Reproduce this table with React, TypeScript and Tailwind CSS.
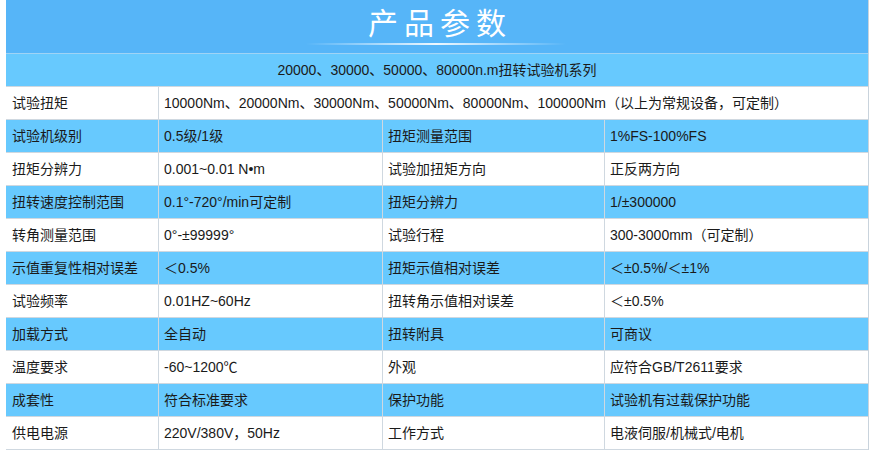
import React from "react";

const rows: [string, string, string, string][] = [
  ["试验机级别", "0.5级/1级", "扭矩测量范围", "1%FS-100%FS"],
  ["扭矩分辨力", "0.001~0.01 N•m", "试验加扭矩方向", "正反两方向"],
  ["扭转速度控制范围", "0.1°-720°/min可定制", "扭矩分辨力", "1/±300000"],
  ["转角测量范围", "0°-±99999°", "试验行程", "300-3000mm（可定制）"],
  ["示值重复性相对误差", "＜0.5%", "扭矩示值相对误差", "＜±0.5%/＜±1%"],
  ["试验频率", "0.01HZ~60Hz", "扭转角示值相对误差", "＜±0.5%"],
  ["加载方式", "全自动", "扭转附具", "可商议"],
  ["温度要求", "-60~1200℃", "外观", "应符合GB/T2611要求"],
  ["成套性", "符合标准要求", "保护功能", "试验机有过载保护功能"],
  ["供电电源", "220V/380V，50Hz", "工作方式", "电液伺服/机械式/电机"],
];

const font = {
  fontFamily: '"Liberation Sans", "Noto Sans CJK SC", sans-serif',
};

export default function App() {
  return (
    <div className="w-[876px] h-[456px] bg-white pl-[6px] pr-[7px]" style={font}>
      <div className="border-r border-[#c9d3dc]">
        <div className="h-[53px] bg-[#56b5f8] flex flex-col items-center justify-center relative">
          <div className="text-white text-[30px] leading-none tracking-[6px] pl-[6px] mt-[-6px]">
            产品参数
          </div>
          <div className="absolute left-[300px] top-[43px] w-[260px] h-[2px] bg-gradient-to-r from-transparent via-white to-transparent opacity-90" />
        </div>
        <div className="h-[33px] bg-[#67c9fe] border-t border-[#9fd3f5] flex items-center justify-center text-[14px] text-[#1a1a1a]">
          20000、30000、50000、80000n.m扭转试验机系列
        </div>
        <div className="h-[33px] flex border-t border-[#cfd8e0] text-[14px] text-[#1a1a1a]">
          <div className="w-[152px] flex items-center pl-[6px]">试验扭矩</div>
          <div className="flex-1 flex items-center pl-[5px] border-l border-[#cfd8e0]">
            10000Nm、20000Nm、30000Nm、50000Nm、80000Nm、100000Nm（以上为常规设备，可定制）
          </div>
        </div>
        {rows.map((r, i) => (
          <div
            key={i}
            className={`h-[33px] flex border-t border-[#cfd8e0] text-[14px] text-[#1a1a1a] ${
              i % 2 === 0 ? "bg-[#67c9fe]" : "bg-white"
            }`}
          >
            <div className="w-[152px] flex items-center pl-[6px]">{r[0]}</div>
            <div className="w-[224px] flex items-center pl-[5px] border-l border-[#cfd8e0]">{r[1]}</div>
            <div className="w-[222px] flex items-center pl-[5px] border-l border-[#cfd8e0]">{r[2]}</div>
            <div className="flex-1 flex items-center pl-[5px] border-l border-[#cfd8e0]">{r[3]}</div>
          </div>
        ))}
        <div className="border-t border-[#cfd8e0]" />
      </div>
    </div>
  );
}
